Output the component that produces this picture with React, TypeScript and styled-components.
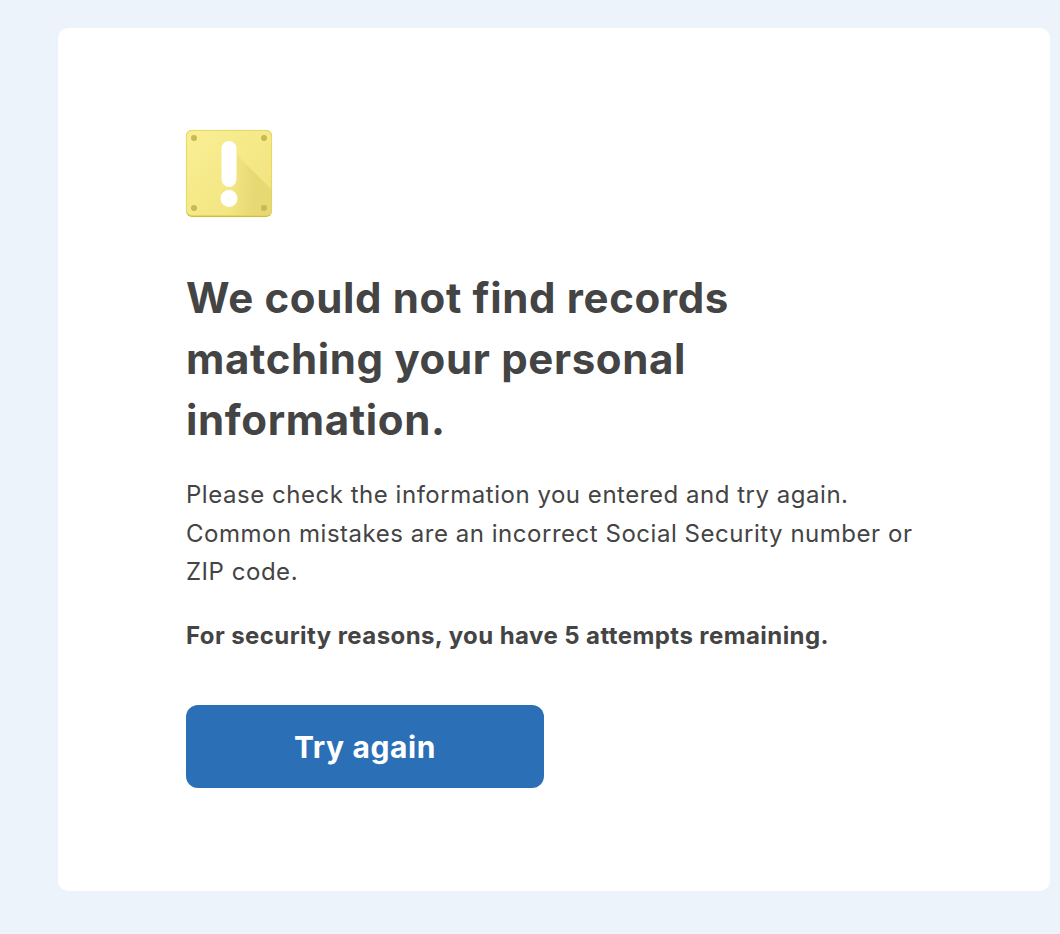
import React from "react";
import styled, { createGlobalStyle } from "styled-components";

const GlobalStyle = createGlobalStyle`
  html, body {
    margin: 0;
    padding: 0;
    background: #ecf3fa;
    font-family: "Inter", "Liberation Sans", sans-serif;
  }
`;

const Page = styled.main`
  box-sizing: border-box;
  width: 1060px;
  height: 934px;
  padding: 28px 10px 43px 58px;
  overflow: hidden;
`;

const Card = styled.section`
  box-sizing: border-box;
  height: 863px;
  padding: 101px 128px 0;
  background: #ffffff;
  border-radius: 10px;
  color: #444444;
`;

const Icon = styled.svg`
  display: block;
  width: 88px;
  height: 88px;
  margin-left: -1px;
`;

const Heading = styled.h1`
  margin: 50px 0 0;
  font-size: 42px;
  line-height: 61px;
  font-weight: 700;
  letter-spacing: 0.65px;
`;

const Body = styled.p`
  margin: 26px 0 0;
  font-size: 24px;
  line-height: 38.5px;
  font-weight: 400;
  letter-spacing: 0.53px;
`;

const Notice = styled.p`
  margin: 25px 0 0;
  font-size: 24px;
  line-height: 38px;
  font-weight: 700;
  letter-spacing: 0.42px;
`;

const Button = styled.button`
  display: block;
  width: 358px;
  height: 83px;
  margin-top: 50px;
  padding: 2px 0 0;
  border: 0;
  border-radius: 12px;
  background: #2b70b6;
  color: #ffffff;
  font-family: inherit;
  font-size: 30px;
  font-weight: 700;
  letter-spacing: 0.6px;
`;

const WarningIcon = () => (
  <Icon viewBox="0 0 88 88" aria-hidden="true">
    <defs>
      <linearGradient id="plate" x1="0" y1="0" x2="1" y2="1">
        <stop offset="0" stopColor="#f9ef94" />
        <stop offset="1" stopColor="#f0e27c" />
      </linearGradient>
      <linearGradient id="fold" gradientUnits="userSpaceOnUse" x1="44" y1="50" x2="82" y2="50">
        <stop offset="0" stopColor="#e6d873" stopOpacity="0" />
        <stop offset="0.7" stopColor="#e6d873" />
        <stop offset="1" stopColor="#e6d873" />
      </linearGradient>
    </defs>
    <rect x="1" y="1" width="86" height="87" rx="6" fill="#cfbc36" />
    <rect x="1" y="1" width="86" height="85.8" rx="6" fill="url(#plate)" />
    <path d="M44 18 L87 61 V80.8 a6 6 0 0 1 -6 6 H44 Z" fill="url(#fold)" />
    <rect x="1.4" y="1.4" width="85.2" height="85.2" rx="5.6" fill="none" stroke="#e3d158" strokeWidth="0.8" />
    <circle cx="9" cy="9" r="3" fill="#c9b955" />
    <circle cx="79" cy="9" r="3" fill="#c9b955" />
    <circle cx="9" cy="79" r="3" fill="#c9b955" />
    <circle cx="79" cy="79" r="3" fill="#c9b955" />
    <rect x="36.5" y="12" width="15" height="46" rx="7.5" fill="#ffffff" />
    <circle cx="44" cy="69.5" r="8.5" fill="#ffffff" />
  </Icon>
);

export default function App() {
  return (
    <>
      <GlobalStyle />
      <Page>
        <Card>
          <WarningIcon />
          <Heading>
            We could not find records
            <br />
            matching your personal
            <br />
            information.
          </Heading>
          <Body>
            Please check the information you entered and try again.
            <br />
            Common mistakes are an incorrect Social Security number or
            <br />
            ZIP code.
          </Body>
          <Notice>For security reasons, you have 5 attempts remaining.</Notice>
          <Button type="button">Try again</Button>
        </Card>
      </Page>
    </>
  );
}
